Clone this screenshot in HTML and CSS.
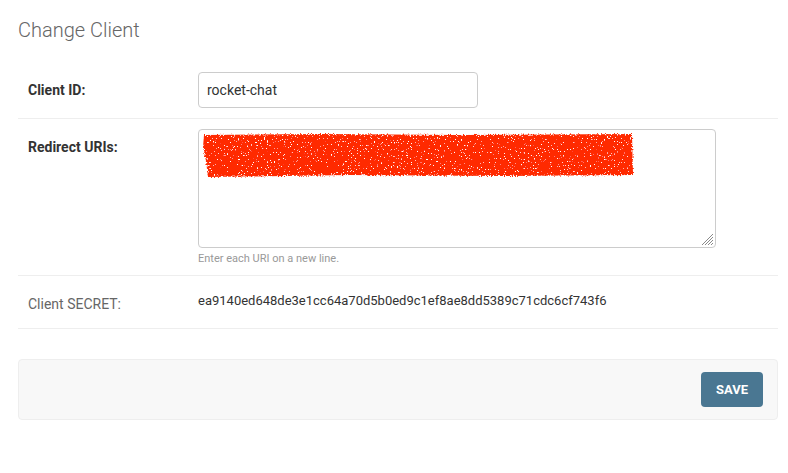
FILE: index.html
```html
<!DOCTYPE html>
<html lang="en">
<head>
<meta charset="utf-8">
<title>Change Client</title>
<link rel="stylesheet" href="styles.css">
</head>
<body>
<div class="content">
  <h1 class="title">Change Client</h1>
  <form class="form">
    <div class="form-row">
      <label class="field-label required" for="id_client_id">Client ID:</label>
      <div class="field">
        <input class="text-input" id="id_client_id" type="text" value="rocket-chat">
      </div>
    </div>
    <div class="form-row">
      <label class="field-label required" for="id_redirect_uris">Redirect URIs:</label>
      <div class="field">
        <div class="textarea-wrap">
          <textarea class="textarea" id="id_redirect_uris"></textarea>
          <svg class="scribble" width="440" height="50" viewBox="0 0 440 50" aria-hidden="true">
            <defs>
              <filter id="rough" x="-3%" y="-15%" width="106%" height="130%">
                <feTurbulence type="fractalNoise" baseFrequency="0.7" numOctaves="2" seed="7" result="noise"/>
                <feDisplacementMap in="SourceGraphic" in2="noise" scale="4" xChannelSelector="R" yChannelSelector="G" result="moved"/>
                <feColorMatrix in="noise" type="matrix" values="0 0 0 0 1  0 0 0 0 1  0 0 0 0 1  14 0 0 0 -9.4" result="spots"/>
                <feComposite in="spots" in2="moved" operator="in" result="inside"/>
                <feMerge>
                  <feMergeNode in="moved"/>
                  <feMergeNode in="inside"/>
                </feMerge>
              </filter>
            </defs>
            <path d="M4 4 L120 3 L260 4 L432 3 L433 44 L300 45 L150 44 L8 46 L6 30 L3 16 Z" fill="#ff2a00" filter="url(#rough)"/>
          </svg>
          <svg class="grip" width="14" height="14" viewBox="0 0 14 14" aria-hidden="true">
            <path d="M13 2 L2 13 M13 5 L5 13 M13 8 L8 13 M13 11 L11 13" stroke="#8a8a8a" stroke-width="1" fill="none"/>
          </svg>
        </div>
        <div class="help">Enter each URI on a new line.</div>
      </div>
    </div>
    <div class="form-row">
      <div class="field-label readonly-label">Client SECRET:</div>
      <div class="field">
        <div class="readonly">ea9140ed648de3e1cc64a70d5b0ed9c1ef8ae8dd5389c71cdc6cf743f6</div>
      </div>
    </div>
    <div class="submit-row">
      <button class="save-button" type="button">Save</button>
    </div>
  </form>
</div>
</body>
</html>
```
FILE: styles.css
```css
* { box-sizing: border-box; }

html, body {
  margin: 0;
  padding: 0;
  background: #fff;
}

body {
  font-family: Roboto, "Liberation Sans", Arial, sans-serif;
  color: #333;
  font-size: 14px;
}

.content {
  padding: 0 10px 0 18px;
}

.title {
  margin: 18px 0 20px;
  font-size: 20px;
  line-height: 24px;
  font-weight: 300;
  color: #666;
}

.form {
  margin: 0;
}

.form-row {
  display: flex;
  padding: 10px;
  border-bottom: 1px solid #eee;
}

.field-label {
  flex: 0 0 170px;
  padding: 8px 10px 0 0;
  font-size: 14px;
  line-height: 20px;
  color: #333;
}

.required {
  font-weight: 700;
}

.readonly-label {
  color: #666;
  font-weight: 400;
}

.field {
  flex: 1 1 auto;
  display: flex;
  flex-direction: column;
  align-items: flex-start;
}

.text-input {
  width: 280px;
  height: 36px;
  margin: 0;
  padding: 0 8px;
  border: 1px solid #ccc;
  border-radius: 4px;
  font-family: Roboto, "Liberation Sans", Arial, sans-serif;
  font-size: 14px;
  color: #333;
  background: #fff;
  outline: none;
}

.textarea-wrap {
  position: relative;
  width: 518px;
  height: 119px;
}

.textarea {
  display: block;
  width: 518px;
  height: 119px;
  margin: 0;
  padding: 5px 6px;
  border: 1px solid #ccc;
  border-radius: 4px;
  resize: none;
  background: #fff;
  font-family: Roboto, "Liberation Sans", Arial, sans-serif;
  font-size: 13px;
  outline: none;
}

.scribble {
  position: absolute;
  left: 2px;
  top: 2px;
  pointer-events: none;
}

.grip {
  position: absolute;
  right: 2px;
  bottom: 2px;
  pointer-events: none;
}

.help {
  padding-top: 4px;
  font-size: 11px;
  line-height: 13px;
  color: #999;
}

.readonly {
  padding: 5px 0 7px;
  font-size: 13px;
  line-height: 20px;
  color: #333;
}

.submit-row {
  display: flex;
  justify-content: flex-end;
  margin-top: 30px;
  padding: 12px 14px;
  background: #f8f8f8;
  border: 1px solid #eee;
  border-radius: 4px;
}

.save-button {
  height: 35px;
  padding: 0 15px;
  border: none;
  border-radius: 4px;
  background: #4a7792;
  color: #fff;
  font-family: Roboto, "Liberation Sans", Arial, sans-serif;
  font-size: 13px;
  font-weight: 700;
  text-transform: uppercase;
  cursor: pointer;
}
```
